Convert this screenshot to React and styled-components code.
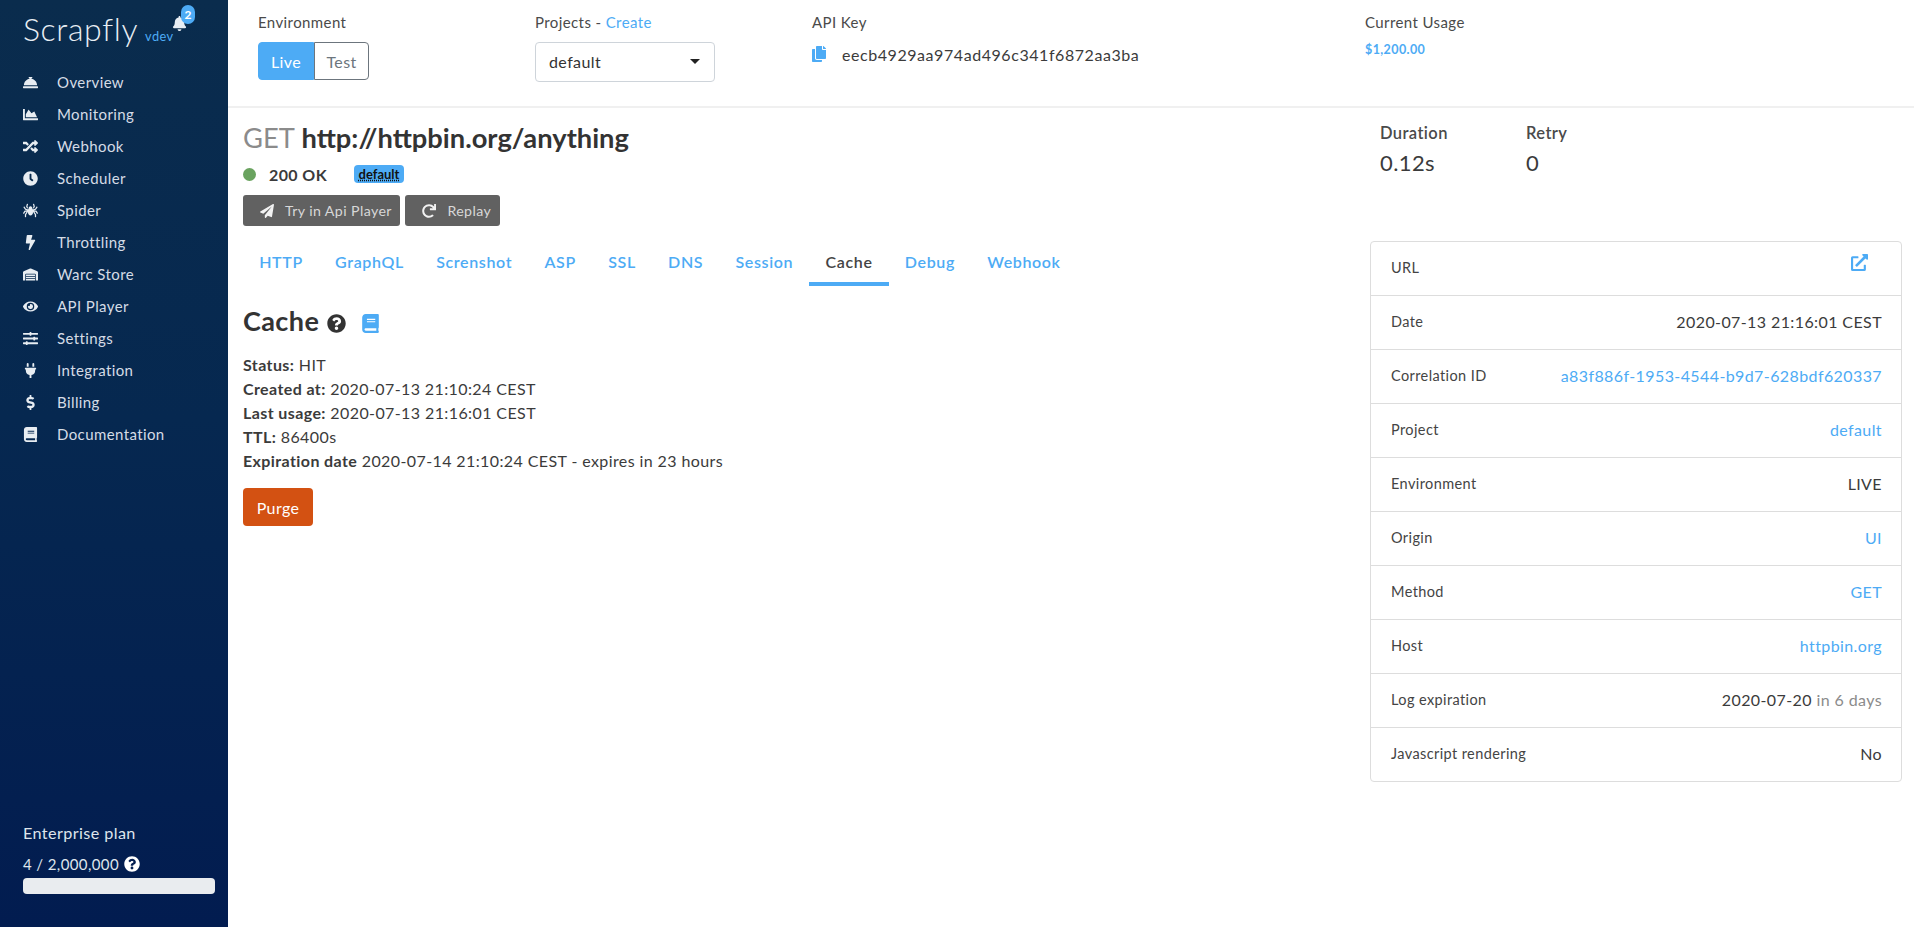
import React from 'react';
import styled, { createGlobalStyle } from 'styled-components';
import {
  FaConciergeBell, FaChartArea, FaRandom, FaClock, FaSpider, FaBolt, FaWarehouse, FaEye,
  FaSlidersH, FaPlug, FaDollarSign, FaBook, FaBell, FaQuestionCircle, FaCopy, FaPaperPlane,
  FaRedo, FaExternalLinkAlt,
} from 'react-icons/fa';

const BLUE = '#4dabf5';

const GlobalStyle = createGlobalStyle`
  html, body { margin: 0; padding: 0; }
  body {
    font-family: "Lato", "Open Sans", sans-serif;
    font-size: 16px;
    color: #3b3b3b;
    background: #fff;
    letter-spacing: 0.025em;
  }
  * { box-sizing: border-box; }
`;

const Page = styled.div`
  display: grid;
  grid-template-columns: 228px 1fr;
  height: 100vh;
  overflow: hidden;
`;

const Sidebar = styled.aside`
  display: flex;
  flex-direction: column;
  justify-content: space-between;
  background: linear-gradient(180deg, #0a2c4d 0%, #062850 45%, #021c50 100%);
  color: #dfe5ec;
  padding: 0 13px 33px 23px;
`;

const Brand = styled.div`
  position: relative;
  display: flex;
  align-items: baseline;
  height: 66px;
  padding-top: 9px;
`;

const Logo = styled.span`
  font-size: 32px;
  font-weight: 300;
  color: #e8eef4;
  letter-spacing: 0.02em;
`;

const Version = styled.span`
  margin-left: 7px;
  font-size: 12.8px;
  color: ${BLUE};
`;

const BellIcon = styled(FaBell)`
  position: absolute;
  left: 149px;
  top: 16px;
  font-size: 15px;
  color: #e8eef4;
`;

const BellCount = styled.span`
  position: absolute;
  left: 158px;
  top: 5px;
  width: 14px;
  height: 19px;
  border-radius: 10px;
  background: ${BLUE};
  color: #fff;
  font-size: 12px;
  font-weight: 700;
  letter-spacing: 0;
  text-align: center;
  line-height: 19px;
`;

const Nav = styled.nav`
  display: flex;
  flex-direction: column;
`;

const NavItem = styled.a`
  display: flex;
  align-items: center;
  height: 32px;
  font-size: 15px;
  color: #d5dce6;
`;

const NavIcon = styled.span`
  display: flex;
  width: 34px;
  color: #e8edf2;
  svg { width: auto; height: 15px; }
`;

const Plan = styled.div`
  color: #dfe5ec;
`;

const PlanName = styled.div`
  font-size: 16.2px;
  line-height: 20px;
  margin-bottom: 11px;
`;

const PlanCount = styled.div`
  display: flex;
  align-items: center;
  gap: 5px;
  line-height: 20px;
  margin-bottom: 4px;
  font-size: 15px;
`;

const PlanBar = styled.div`
  height: 16px;
  border-radius: 4px;
  background: #e9ecef;
`;

const Main = styled.main`
  display: flex;
  flex-direction: column;
  min-width: 0;
`;

const TopBar = styled.header`
  display: grid;
  grid-template-columns: 277px 277px 553px 1fr;
  height: 108px;
  padding: 12px 0 0 30px;
  border-bottom: 2px solid #f0f0f0;
`;

const TopLabel = styled.div`
  font-size: 15px;
  line-height: 20px;
  color: #4a4a4a;
  margin-bottom: 10px;
`;

const TopLink = styled.span`
  color: ${BLUE};
`;

const Toggle = styled.div`
  display: inline-flex;
  height: 38px;
`;

const ToggleOption = styled.span`
  display: flex;
  align-items: center;
  justify-content: center;
  width: ${p => (p.$active ? '56px' : '55px')};
  font-size: 16px;
  background: ${p => (p.$active ? BLUE : '#fff')};
  color: ${p => (p.$active ? '#fff' : '#6c757d')};
  border: 1px solid ${p => (p.$active ? BLUE : '#6c757d')};
  border-radius: ${p => (p.$active ? '4px 0 0 4px' : '0 4px 4px 0')};
`;

const Select = styled.div`
  display: flex;
  align-items: center;
  justify-content: space-between;
  width: 180px;
  height: 40px;
  padding: 0 14px 2px 13px;
  border: 1px solid #ced4da;
  border-radius: 4px;
  font-size: 16px;
  color: #333;
`;

const Caret = styled.span`
  width: 0;
  height: 0;
  border-left: 5px solid transparent;
  border-right: 5px solid transparent;
  border-top: 5px solid #222;
`;

const KeyRow = styled.div`
  display: flex;
  align-items: center;
  gap: 15px;
  height: 24px;
  margin-left: -1px;
  font-size: 16px;
  letter-spacing: 0.035em;
  color: #3b3b3b;
  svg { width: auto; height: 16px; color: ${BLUE}; }
`;

const Usage = styled.div`
  margin-top: 2px;
  font-size: 12.5px;
  font-weight: 700;
  color: ${BLUE};
`;

const Content = styled.div`
  display: grid;
  grid-template-columns: 1142px 532px;
`;

const Left = styled.section`
  padding: 10px 15px 0;
`;

const Title = styled.h1`
  margin: 0;
  font-size: 27.3px;
  line-height: 40px;
  font-weight: 700;
  letter-spacing: 0;
  color: #333;
`;

const Method = styled.span`
  font-weight: 400;
  color: #8b8b8b;
`;

const StatusRow = styled.div`
  display: flex;
  align-items: center;
  height: 30px;
  margin-top: 1px;
`;

const Dot = styled.span`
  width: 13px;
  height: 13px;
  border-radius: 50%;
  background: #6aa35f;
  margin-right: 13px;
`;

const StatusText = styled.strong`
  font-size: 16px;
  font-weight: 700;
  color: #3b3b3b;
  width: 85px;
`;

const Badge = styled.span`
  display: flex;
  align-items: center;
  justify-content: center;
  width: 50px;
  height: 18px;
  border-radius: 4px;
  background: ${BLUE};
  color: #111;
  font-size: 13px;
  font-weight: 700;
  letter-spacing: 0;
  text-decoration: underline dotted;
`;

const Actions = styled.div`
  display: flex;
  gap: 5px;
  margin-top: 6px;
`;

const ActionButton = styled.button`
  display: flex;
  align-items: center;
  gap: 11px;
  height: 31px;
  padding: 0 8.5px 0 17px;
  border: 0;
  border-radius: 3px;
  background: #616161;
  color: #d8d8d8;
  font-family: inherit;
  font-size: 14.2px;
  letter-spacing: inherit;
  svg { color: #f2f2f2; font-size: 14px; }
`;

const Tabs = styled.nav`
  display: flex;
  margin-top: 19px;
`;

const Tab = styled.a`
  display: flex;
  align-items: center;
  height: 41px;
  padding: 0 16.15px 4px;
  border-bottom: 4px solid ${p => (p.$active ? BLUE : 'transparent')};
  font-size: 16px;
  font-weight: 600;
  letter-spacing: 0.04em;
  color: ${p => (p.$active ? '#444' : BLUE)};
`;

const CacheHeading = styled.h2`
  display: flex;
  align-items: center;
  margin: 17px 0 14px;
  font-size: 27px;
  line-height: 36px;
  font-weight: 700;
  color: #333;
`;

const HelpIcon = styled(FaQuestionCircle)`
  margin: 5px 0 0 8px;
  font-size: 19px;
  color: #333;
`;

const BookIcon = styled(FaBook)`
  width: auto;
  height: 19px;
  margin: 5px 0 0 15px;
  color: ${BLUE};
`;

const Detail = styled.div`
  font-size: 16px;
  line-height: 24px;
  color: #3b3b3b;
  strong { font-weight: 700; }
`;

const PurgeButton = styled.button`
  display: block;
  width: 70px;
  height: 38px;
  margin-top: 15px;
  border: 0;
  border-radius: 4px;
  background: #d35112;
  color: #fff;
  font-family: inherit;
  font-size: 16px;
  letter-spacing: inherit;
`;

const Right = styled.section`
  display: flex;
  flex-direction: column;
`;

const Stats = styled.div`
  display: flex;
  height: 133px;
  padding: 15px 0 0 10px;
`;

const Stat = styled.div`
  width: 146px;
`;

const StatLabel = styled.div`
  font-size: 16.5px;
  font-weight: 600;
  line-height: 20px;
  color: #4a4a4a;
  margin-bottom: 6px;
`;

const StatValue = styled.div`
  font-size: 22px;
  line-height: 28px;
  color: #3b3b3b;
`;

const Card = styled.div`
  border: 1px solid #ddd;
  border-radius: 4px;
`;

const Row = styled.div`
  display: flex;
  align-items: center;
  justify-content: space-between;
  height: 54px;
  padding: 0 19px 2px 20px;
  border-bottom: 1px solid #ddd;
  &:last-child { border-bottom: 0; height: 53px; }
`;

const RowLabel = styled.span`
  font-size: 14.5px;
  color: #444;
`;

const RowValue = styled.span`
  font-size: 16px;
  color: ${p => (p.$link ? BLUE : '#3b3b3b')};
`;

const Muted = styled.span`
  color: #8b8b8b;
`;

const ExternalIcon = styled(FaExternalLinkAlt)`
  margin: 0 14px 10px 0;
  font-size: 17px;
  color: ${BLUE};
`;

const navItems = [
  [FaConciergeBell, 'Overview'],
  [FaChartArea, 'Monitoring'],
  [FaRandom, 'Webhook'],
  [FaClock, 'Scheduler'],
  [FaSpider, 'Spider'],
  [FaBolt, 'Throttling'],
  [FaWarehouse, 'Warc Store'],
  [FaEye, 'API Player'],
  [FaSlidersH, 'Settings'],
  [FaPlug, 'Integration'],
  [FaDollarSign, 'Billing'],
  [FaBook, 'Documentation'],
];

const tabs = ['HTTP', 'GraphQL', 'Screnshot', 'ASP', 'SSL', 'DNS', 'Session', 'Cache', 'Debug', 'Webhook'];

const App = () => (
  <Page>
    <GlobalStyle />
    <Sidebar>
      <div>
        <Brand>
          <Logo>Scrapfly</Logo>
          <Version>vdev</Version>
          <BellIcon />
          <BellCount>2</BellCount>
        </Brand>
        <Nav>
          {navItems.map(([Icon, label]) => (
            <NavItem key={label}>
              <NavIcon><Icon /></NavIcon>
              {label}
            </NavItem>
          ))}
        </Nav>
      </div>
      <Plan>
        <PlanName>Enterprise plan</PlanName>
        <PlanCount>4 / 2,000,000 <FaQuestionCircle size={16} color="#fff" /></PlanCount>
        <PlanBar />
      </Plan>
    </Sidebar>
    <Main>
      <TopBar>
        <div>
          <TopLabel>Environment</TopLabel>
          <Toggle>
            <ToggleOption $active>Live</ToggleOption>
            <ToggleOption>Test</ToggleOption>
          </Toggle>
        </div>
        <div>
          <TopLabel>Projects - <TopLink>Create</TopLink></TopLabel>
          <Select>default<Caret /></Select>
        </div>
        <div>
          <TopLabel>API Key</TopLabel>
          <KeyRow><FaCopy />eecb4929aa974ad496c341f6872aa3ba</KeyRow>
        </div>
        <div>
          <TopLabel>Current Usage</TopLabel>
          <Usage>$1,200.00</Usage>
        </div>
      </TopBar>
      <Content>
        <Left>
          <Title><Method>GET</Method> http://httpbin.org/anything</Title>
          <StatusRow>
            <Dot />
            <StatusText>200 OK</StatusText>
            <Badge>default</Badge>
          </StatusRow>
          <Actions>
            <ActionButton><FaPaperPlane />Try in Api Player</ActionButton>
            <ActionButton><FaRedo />Replay</ActionButton>
          </Actions>
          <Tabs>
            {tabs.map(tab => <Tab key={tab} $active={tab === 'Cache'}>{tab}</Tab>)}
          </Tabs>
          <CacheHeading>Cache<HelpIcon /><BookIcon /></CacheHeading>
          <Detail><strong>Status:</strong> HIT</Detail>
          <Detail><strong>Created at:</strong> 2020-07-13 21:10:24 CEST</Detail>
          <Detail><strong>Last usage:</strong> 2020-07-13 21:16:01 CEST</Detail>
          <Detail><strong>TTL:</strong> 86400s</Detail>
          <Detail><strong>Expiration date</strong> 2020-07-14 21:10:24 CEST - expires in 23 hours</Detail>
          <PurgeButton>Purge</PurgeButton>
        </Left>
        <Right>
          <Stats>
            <Stat><StatLabel>Duration</StatLabel><StatValue>0.12s</StatValue></Stat>
            <Stat><StatLabel>Retry</StatLabel><StatValue>0</StatValue></Stat>
          </Stats>
          <Card>
            <Row><RowLabel>URL</RowLabel><ExternalIcon /></Row>
            <Row><RowLabel>Date</RowLabel><RowValue>2020-07-13 21:16:01 CEST</RowValue></Row>
            <Row><RowLabel>Correlation ID</RowLabel><RowValue $link>a83f886f-1953-4544-b9d7-628bdf620337</RowValue></Row>
            <Row><RowLabel>Project</RowLabel><RowValue $link>default</RowValue></Row>
            <Row><RowLabel>Environment</RowLabel><RowValue>LIVE</RowValue></Row>
            <Row><RowLabel>Origin</RowLabel><RowValue $link>UI</RowValue></Row>
            <Row><RowLabel>Method</RowLabel><RowValue $link>GET</RowValue></Row>
            <Row><RowLabel>Host</RowLabel><RowValue $link>httpbin.org</RowValue></Row>
            <Row><RowLabel>Log expiration</RowLabel><RowValue>2020-07-20 <Muted>in 6 days</Muted></RowValue></Row>
            <Row><RowLabel>Javascript rendering</RowLabel><RowValue>No</RowValue></Row>
          </Card>
        </Right>
      </Content>
    </Main>
  </Page>
);

export default App;
